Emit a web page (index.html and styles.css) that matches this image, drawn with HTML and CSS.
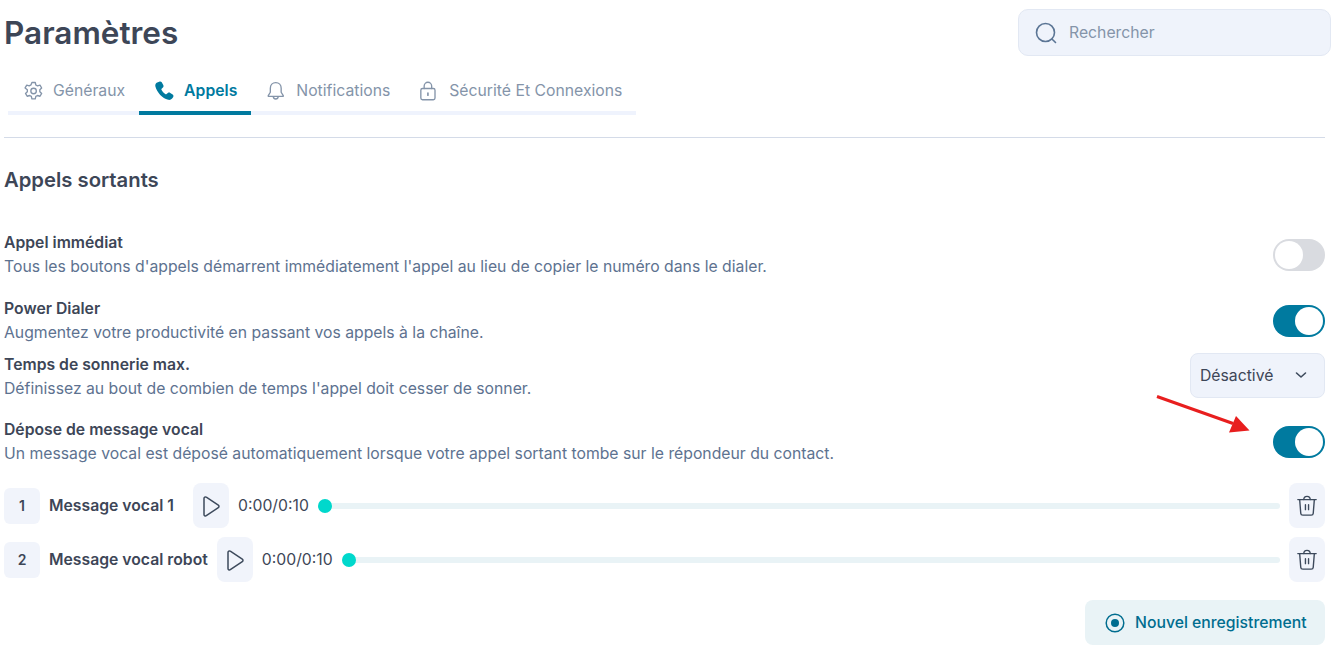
FILE: index.html
```html
<!DOCTYPE html>
<html lang="fr">
<head>
    <meta charset="UTF-8">
    <title>Paramètres</title>
    <link rel="stylesheet" href="styles.css">
</head>
<body>
    <div class="page">
        <header class="top">
            <h1>Paramètres</h1>
            <div class="search">
                <svg width="24" height="24" viewBox="0 0 24 24" fill="none" stroke="#5b7595" stroke-width="1.6" stroke-linecap="round"><circle cx="11.5" cy="11.5" r="9"/><path d="M18.200 18.200l3.300 3.300"/></svg>
                <span>Rechercher</span>
            </div>
        </header>

        <nav class="tabs">
            <a class="tab">
                <svg width="20" height="20" viewBox="0.500 0 24 24" fill="none" stroke="currentColor" stroke-width="1.6" stroke-linejoin="round"><path d="M10 1.800h4l.7 3 2 1.100 3-.9 2 3.400-2.200 2.100v2.300l2.200 2.100-2 3.400-3-.9-2 1.100-.7 3h-4l-.7-3-2-1.100-3 .9-2-3.400 2.200-2.100v-2.300L1.800 8.300l2-3.400 3 .9 2-1.100z"/><circle cx="12" cy="12" r="3.300"/></svg>
                Généraux
            </a>
            <a class="tab active">
                <svg width="20" height="20" viewBox="2 1 22 22" fill="currentColor"><path d="M6.600 1.800c1-.6 2.200-.3 2.800.7l1.700 2.900c.5.900.4 2-.4 2.700L9.300 9.400c-.3.300-.4.700-.2 1.100 1 2.100 2.500 3.700 4.500 5 .4.200.8.200 1.100-.1l1.400-1.200c.8-.6 1.900-.7 2.700-.1l2.600 1.800c1 .7 1.200 2 .5 2.900l-1.100 1.500c-1 1.300-2.700 1.900-4.300 1.400C9.900 19.700 4.500 14 2.500 7.300 2 5.700 2.500 4 3.800 3z"/></svg>
                Appels
            </a>
            <a class="tab">
                <svg width="20" height="20" viewBox="1.500 0 24 24" fill="none" stroke="currentColor" stroke-width="1.600" stroke-linejoin="round" stroke-linecap="round"><path d="M12 2c-3.900 0-6.500 3-6.500 6.700v4.800L3 17.500c-.3.500 0 1 .6 1h16.800c.6 0 .9-.5.600-1l-2.500-4V8.700C18.500 5 15.900 2 12 2z"/><path d="M9 18.800c.2 1.700 1.400 2.800 3 2.800s2.800-1.100 3-2.800"/></svg>
                Notifications
            </a>
            <a class="tab">
                <svg width="20" height="20" viewBox="2.500 0 24 24" fill="none" stroke="currentColor" stroke-width="1.600" stroke-linecap="round"><rect x="3.500" y="9" width="17" height="13.500" rx="2"/><path d="M7.500 9V6a4.500 4.500 0 0 1 9 0v3"/><path d="M12 14.500v2.500" stroke-width="2"/></svg>
                Sécurité Et Connexions
            </a>
        </nav>

        <hr class="divider">

        <h2>Appels sortants</h2>

        <section class="settings">
            <div class="setting first">
                <div>
                    <div class="label">Appel immédiat</div>
                    <div class="desc">Tous les boutons d'appels démarrent immédiatement l'appel au lieu de copier le numéro dans le dialer.</div>
                </div>
                <div class="toggle"><span class="knob"></span></div>
            </div>
            <div class="setting second">
                <div>
                    <div class="label">Power Dialer</div>
                    <div class="desc">Augmentez votre productivité en passant vos appels à la chaîne.</div>
                </div>
                <div class="toggle on"><span class="knob"></span></div>
            </div>
            <div class="setting third">
                <div>
                    <div class="label">Temps de sonnerie max.</div>
                    <div class="desc">Définissez au bout de combien de temps l'appel doit cesser de sonner.</div>
                </div>
                <div class="select">
                    Désactivé
                    <svg width="14" height="14" viewBox="0 0 14 14" fill="none" stroke="#3d4a5c" stroke-width="1.600" stroke-linecap="round" stroke-linejoin="round"><path d="M2.500 5l4.500 4 4.500-4"/></svg>
                </div>
            </div>
            <div class="setting fourth">
                <div>
                    <div class="label">Dépose de message vocal</div>
                    <div class="desc">Un message vocal est déposé automatiquement lorsque votre appel sortant tombe sur le répondeur du contact.</div>
                </div>
                <div class="toggle on"><span class="knob"></span></div>
            </div>
        </section>

        <section class="messages">
            <div class="message">
                <div class="num">1</div>
                <div class="msg-name">Message vocal 1</div>
                <div class="icon-btn">
                    <svg width="24" height="24" viewBox="0 0 24 24" fill="none" stroke="#3d4a5c" stroke-width="1.500" stroke-linejoin="round"><path d="M5 4.500c0-1.300 1.300-2 2.300-1.300l12 8c.9.600.9 1.900 0 2.500l-12 8c-1 .7-2.300 0-2.300-1.300z"/></svg>
                </div>
                <div class="time">0:00/0:10</div>
                <div class="track"><span class="thumb"></span></div>
                <div class="icon-btn">
                    <svg width="22" height="22" viewBox="0 0 24 24" fill="none" stroke="#3d4a5c" stroke-width="1.500" stroke-linecap="round" stroke-linejoin="round"><path d="M2 5h20"/><path d="M8.500 5c0-2 1.500-3.500 3.500-3.500s3.500 1.500 3.500 3.500"/><path d="M4 5l1.200 15c.1 1.200 1 2 2.200 2h9.200c1.200 0 2.100-.8 2.200-2L20 5"/><path d="M10.300 10.500V16M13.700 10.500V16"/></svg>
                </div>
            </div>
            <div class="message">
                <div class="num">2</div>
                <div class="msg-name">Message vocal robot</div>
                <div class="icon-btn">
                    <svg width="24" height="24" viewBox="0 0 24 24" fill="none" stroke="#3d4a5c" stroke-width="1.500" stroke-linejoin="round"><path d="M5 4.500c0-1.300 1.300-2 2.300-1.300l12 8c.9.600.9 1.900 0 2.500l-12 8c-1 .7-2.300 0-2.300-1.300z"/></svg>
                </div>
                <div class="time">0:00/0:10</div>
                <div class="track"><span class="thumb"></span></div>
                <div class="icon-btn">
                    <svg width="22" height="22" viewBox="0 0 24 24" fill="none" stroke="#3d4a5c" stroke-width="1.500" stroke-linecap="round" stroke-linejoin="round"><path d="M2 5h20"/><path d="M8.500 5c0-2 1.500-3.500 3.500-3.500s3.500 1.500 3.500 3.500"/><path d="M4 5l1.200 15c.1 1.200 1 2 2.200 2h9.200c1.200 0 2.100-.8 2.200-2L20 5"/><path d="M10.300 10.500V16M13.700 10.500V16"/></svg>
                </div>
            </div>
        </section>

        <div class="actions">
            <div class="record">
                <svg width="20" height="20" viewBox="0 0 20 20"><circle cx="10" cy="10" r="8.800" fill="none" stroke="#006d8f" stroke-width="1.500"/><circle cx="10" cy="10" r="4" fill="#006d8f"/></svg>
                Nouvel enregistrement
            </div>
        </div>

        <svg class="arrow" width="96" height="40" viewBox="0 0 96 40"><path d="M1 1.500l76 27" stroke="#e81e1e" stroke-width="3" fill="none"/><path d="M93.500 35.500L73 37.500 80 21z" fill="#e81e1e"/></svg>
    </div>
</body>
</html>
```

FILE: styles.css
```css
* {
    box-sizing: border-box;
}
html, body {
    margin: 0;
    overflow: hidden;
}
body {
    font-family: Inter, 'Noto Sans', sans-serif;
    background: white;
    color: #3d4657;
}
.page {
    position: relative;
    height: 647px;
    padding: 0 6px 0 4px;
}
.top {
    display: flex;
    justify-content: space-between;
    align-items: flex-start;
    height: 68px;
}
h1 {
    margin: 14px 0 0;
    font-size: 31.5px;
    line-height: 38px;
    font-weight: 600;
}
.search {
    display: flex;
    align-items: center;
    gap: 11px;
    width: 313px;
    height: 47px;
    margin: 9px -6px 0 0;
    padding-left: 15px;
    background: #eff3fb;
    border: 1px solid #e2e8f3;
    border-radius: 10px;
    font-size: 15.75px;
    color: #8494a9;
}
.tabs {
    display: inline-flex;
    margin-left: 4px;
    border-bottom: 4px solid #eff3fd;
    height: 47px;
}
.tab {
    display: flex;
    align-items: center;
    gap: 9px;
    height: 47px;
    padding: 2px 14px 4px 16px;
    font-size: 15.75px;
    color: #8494a9;
}
.tab.active {
    color: #007a9f;
    font-weight: 600;
    border-bottom: 4px solid #007a9f;
    padding-bottom: 0;
}
.divider {
    margin: 22px 0 0;
    border: 0;
    border-top: 1px solid #d4dbe8;
}
h2 {
    margin: 29px 0 0;
    font-size: 20.25px;
    line-height: 26px;
    font-weight: 600;
}
.settings {
    margin-top: 35px;
}
.setting {
    display: flex;
    justify-content: space-between;
    align-items: center;
}
.first {
    height: 54px;
}
.second {
    height: 54px;
    margin-top: 12px;
}
.third {
    height: 54px;
    margin-top: 2px;
}
.fourth {
    height: 54px;
    margin-top: 11px;
}
.label {
    font-size: 15.75px;
    line-height: 24px;
    font-weight: 600;
}
.desc {
    font-size: 15.75px;
    line-height: 24px;
    color: #5d7290;
}
.toggle {
    display: flex;
    width: 52px;
    height: 32px;
    padding: 2px;
    background: #d9dbe0;
    border-radius: 16px;
}
.toggle.on {
    justify-content: flex-end;
    background: #007a9f;
}
.knob {
    width: 28px;
    height: 28px;
    background: white;
    border-radius: 50%;
}
.select {
    display: flex;
    align-items: center;
    justify-content: space-between;
    width: 135px;
    height: 45px;
    margin-bottom: 4px;
    padding: 0 16px 0 9px;
    background: #eff3fb;
    border: 1px solid #e2e8f3;
    border-radius: 8px;
    font-size: 15.75px;
}
.messages {
    margin-top: 14px;
}
.message {
    display: flex;
    align-items: center;
    height: 45px;
    margin-bottom: 9px;
}
.num {
    display: flex;
    align-items: center;
    justify-content: center;
    width: 36px;
    height: 36px;
    background: #f1f4fb;
    border-radius: 6px;
    font-size: 14px;
    font-weight: 600;
}
.msg-name {
    min-width: 135px;
    margin: 0 9px;
    font-size: 15.75px;
    font-weight: 600;
}
.icon-btn {
    display: flex;
    align-items: center;
    justify-content: center;
    flex: none;
    width: 36px;
    height: 45px;
    background: #f1f4fb;
    border-radius: 8px;
}
.time {
    margin: 0 9px;
    font-size: 15.75px;
}
.track {
    position: relative;
    flex: 1;
    height: 6px;
    margin-right: 9px;
    background: #e9f3f6;
    border-radius: 3px;
}
.thumb {
    position: absolute;
    left: 0;
    top: -4px;
    width: 14px;
    height: 14px;
    background: #00d8cc;
    border-radius: 50%;
}
.actions {
    display: flex;
    justify-content: flex-end;
    margin-top: 18px;
}
.record {
    display: flex;
    align-items: center;
    gap: 10px;
    width: 240px;
    height: 45px;
    padding-left: 20px;
    background: #e9f3f6;
    border-radius: 8px;
    font-size: 15.75px;
    font-weight: 500;
    color: #006d8f;
}
.arrow {
    position: absolute;
    left: 1156px;
    top: 395px;
}
```
